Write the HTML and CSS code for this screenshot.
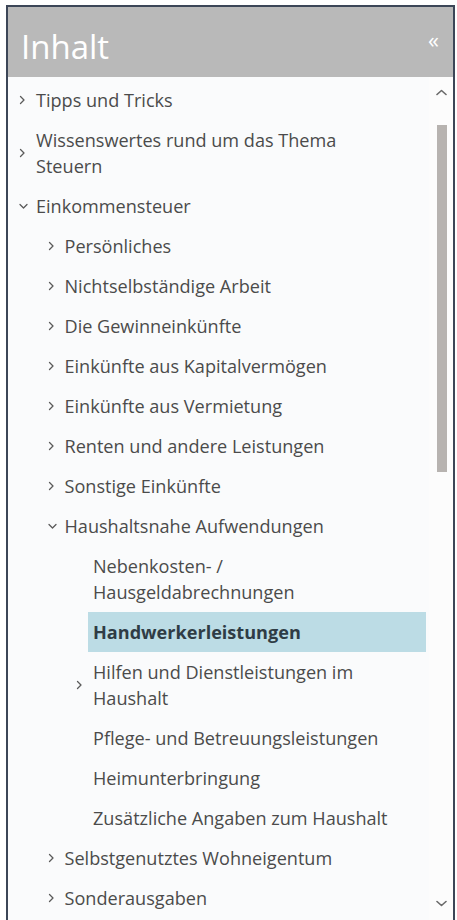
FILE: index.html
```html
<!DOCTYPE html>
<html lang="de">
<head>
<meta charset="utf-8">
<title>Inhalt</title>
<link rel="stylesheet" href="styles.css">
</head>
<body>
<div class="panel">
  <div class="header">
    <span class="title">Inhalt</span>
    <span class="collapse">«</span>
  </div>
  <div class="body">
    <ul class="tree">
      <li class="row l0"><span class="chev"><svg width="7" height="10" viewBox="0 0 7 10"><polyline points="1.5,1.5 5,5 1.5,8.5"/></svg></span><span class="label">Tipps und Tricks</span></li>
      <li class="row l0"><span class="chev"><svg width="7" height="10" viewBox="0 0 7 10"><polyline points="1.5,1.5 5,5 1.5,8.5"/></svg></span><span class="label">Wissenswertes rund um das Thema Steuern</span></li>
      <li class="row l0"><span class="chev"><svg width="9" height="7" viewBox="0 0 9 7"><polyline points="1,1.5 4.5,5 8,1.5"/></svg></span><span class="label">Einkommensteuer</span></li>
      <li class="row l1"><span class="chev"><svg width="7" height="10" viewBox="0 0 7 10"><polyline points="1.5,1.5 5,5 1.5,8.5"/></svg></span><span class="label">Persönliches</span></li>
      <li class="row l1"><span class="chev"><svg width="7" height="10" viewBox="0 0 7 10"><polyline points="1.5,1.5 5,5 1.5,8.5"/></svg></span><span class="label">Nichtselbständige Arbeit</span></li>
      <li class="row l1"><span class="chev"><svg width="7" height="10" viewBox="0 0 7 10"><polyline points="1.5,1.5 5,5 1.5,8.5"/></svg></span><span class="label">Die Gewinneinkünfte</span></li>
      <li class="row l1"><span class="chev"><svg width="7" height="10" viewBox="0 0 7 10"><polyline points="1.5,1.5 5,5 1.5,8.5"/></svg></span><span class="label">Einkünfte aus Kapitalvermögen</span></li>
      <li class="row l1"><span class="chev"><svg width="7" height="10" viewBox="0 0 7 10"><polyline points="1.5,1.5 5,5 1.5,8.5"/></svg></span><span class="label">Einkünfte aus Vermietung</span></li>
      <li class="row l1"><span class="chev"><svg width="7" height="10" viewBox="0 0 7 10"><polyline points="1.5,1.5 5,5 1.5,8.5"/></svg></span><span class="label">Renten und andere Leistungen</span></li>
      <li class="row l1"><span class="chev"><svg width="7" height="10" viewBox="0 0 7 10"><polyline points="1.5,1.5 5,5 1.5,8.5"/></svg></span><span class="label">Sonstige Einkünfte</span></li>
      <li class="row l1"><span class="chev"><svg width="9" height="7" viewBox="0 0 9 7"><polyline points="1,1.5 4.5,5 8,1.5"/></svg></span><span class="label">Haushaltsnahe Aufwendungen</span></li>
      <li class="row l2"><span class="chev"></span><span class="label">Nebenkosten- / Hausgeldabrechnungen</span></li>
      <li class="row l2 active"><span class="chev"></span><span class="label">Handwerkerleistungen</span></li>
      <li class="row l2"><span class="chev"><svg width="7" height="10" viewBox="0 0 7 10"><polyline points="1.5,1.5 5,5 1.5,8.5"/></svg></span><span class="label">Hilfen und Dienstleistungen im Haushalt</span></li>
      <li class="row l2"><span class="chev"></span><span class="label">Pflege- und Betreuungsleistungen</span></li>
      <li class="row l2"><span class="chev"></span><span class="label">Heimunterbringung</span></li>
      <li class="row l2"><span class="chev"></span><span class="label">Zusätzliche Angaben zum Haushalt</span></li>
      <li class="row l1"><span class="chev"><svg width="7" height="10" viewBox="0 0 7 10"><polyline points="1.5,1.5 5,5 1.5,8.5"/></svg></span><span class="label">Selbstgenutztes Wohneigentum</span></li>
      <li class="row l1"><span class="chev"><svg width="7" height="10" viewBox="0 0 7 10"><polyline points="1.5,1.5 5,5 1.5,8.5"/></svg></span><span class="label">Sonderausgaben</span></li>
    </ul>
    <div class="scrollbar">
      <div class="arrow up"><svg width="11" height="7" viewBox="0 0 11 7"><polyline points="1,5.5 5.5,1.5 10,5.5"/></svg></div>
      <div class="thumb"></div>
      <div class="spacer"></div>
      <div class="arrow down"><svg width="11" height="7" viewBox="0 0 11 7"><polyline points="1,1.5 5.5,5.5 10,1.5"/></svg></div>
    </div>
  </div>
</div>
</body>
</html>
```
FILE: styles.css
```css
html, body {
  margin: 0;
  padding: 0;
  height: 920px;
  overflow: hidden;
  background: #ffffff;
}

.panel {
  box-sizing: border-box;
  margin: 5px 0 0 6px;
  width: 449px;
  height: 915px;
  border: 2px solid #3c4657;
  border-bottom: none;
  background: #fafbfc;
  display: flex;
  flex-direction: column;
  overflow: hidden;
  font-family: "Open Sans", "Noto Sans", sans-serif;
}

.header {
  height: 70px;
  flex: none;
  background: #b9b9b9;
  display: flex;
  align-items: center;
  justify-content: space-between;
  padding: 10px 14px 0 13px;
  box-sizing: border-box;
  color: #ffffff;
}

.title {
  font-size: 33px;
  line-height: 40px;
}

.collapse {
  font-size: 22px;
  line-height: 22px;
  margin-top: -16px;
}

.body {
  flex: 1;
  display: flex;
  min-height: 0;
  box-shadow: inset -1px 0 0 #e3ebf1;
}

.tree {
  list-style: none;
  margin: 0;
  padding: 3px 0 0 0;
  flex: 1;
  min-width: 0;
}

.row {
  display: flex;
  align-items: center;
  padding-left: 11px;
  color: #4b4b4b;
  font-size: 18.1px;
  line-height: 26px;
}

.row.l1 { padding-left: 39.5px; }
.row.l2 { padding-left: 68px; }

.chev {
  flex: none;
  width: 17px;
  display: flex;
  align-items: center;
}

.chev svg polyline,
.arrow svg polyline {
  fill: none;
  stroke: #5a5a5a;
  stroke-width: 1.3;
  stroke-linecap: round;
  stroke-linejoin: round;
}

.label {
  flex: 1;
  min-width: 0;
  margin-left: -5px;
  margin-right: 3px;
  padding: 7px 27px 7px 5px;
}

.row.active .label {
  background: #bcdce5;
  color: #2f3c45;
  font-weight: 700;
}

.scrollbar {
  flex: none;
  width: 24px;
  display: flex;
  flex-direction: column;
  align-items: center;
  background: #fcfcfc;
}

.arrow {
  height: 30px;
  width: 100%;
  display: flex;
  align-items: center;
  justify-content: center;
}

.arrow.down { margin-bottom: 2px; }

.arrow svg polyline {
  stroke: #6a6a6a;
  stroke-width: 1.6;
}

.thumb {
  width: 10px;
  height: 347px;
  margin-top: 18px;
  margin-left: 1px;
  background: #b7b3b0;
}

.spacer { flex: 1; }
```
